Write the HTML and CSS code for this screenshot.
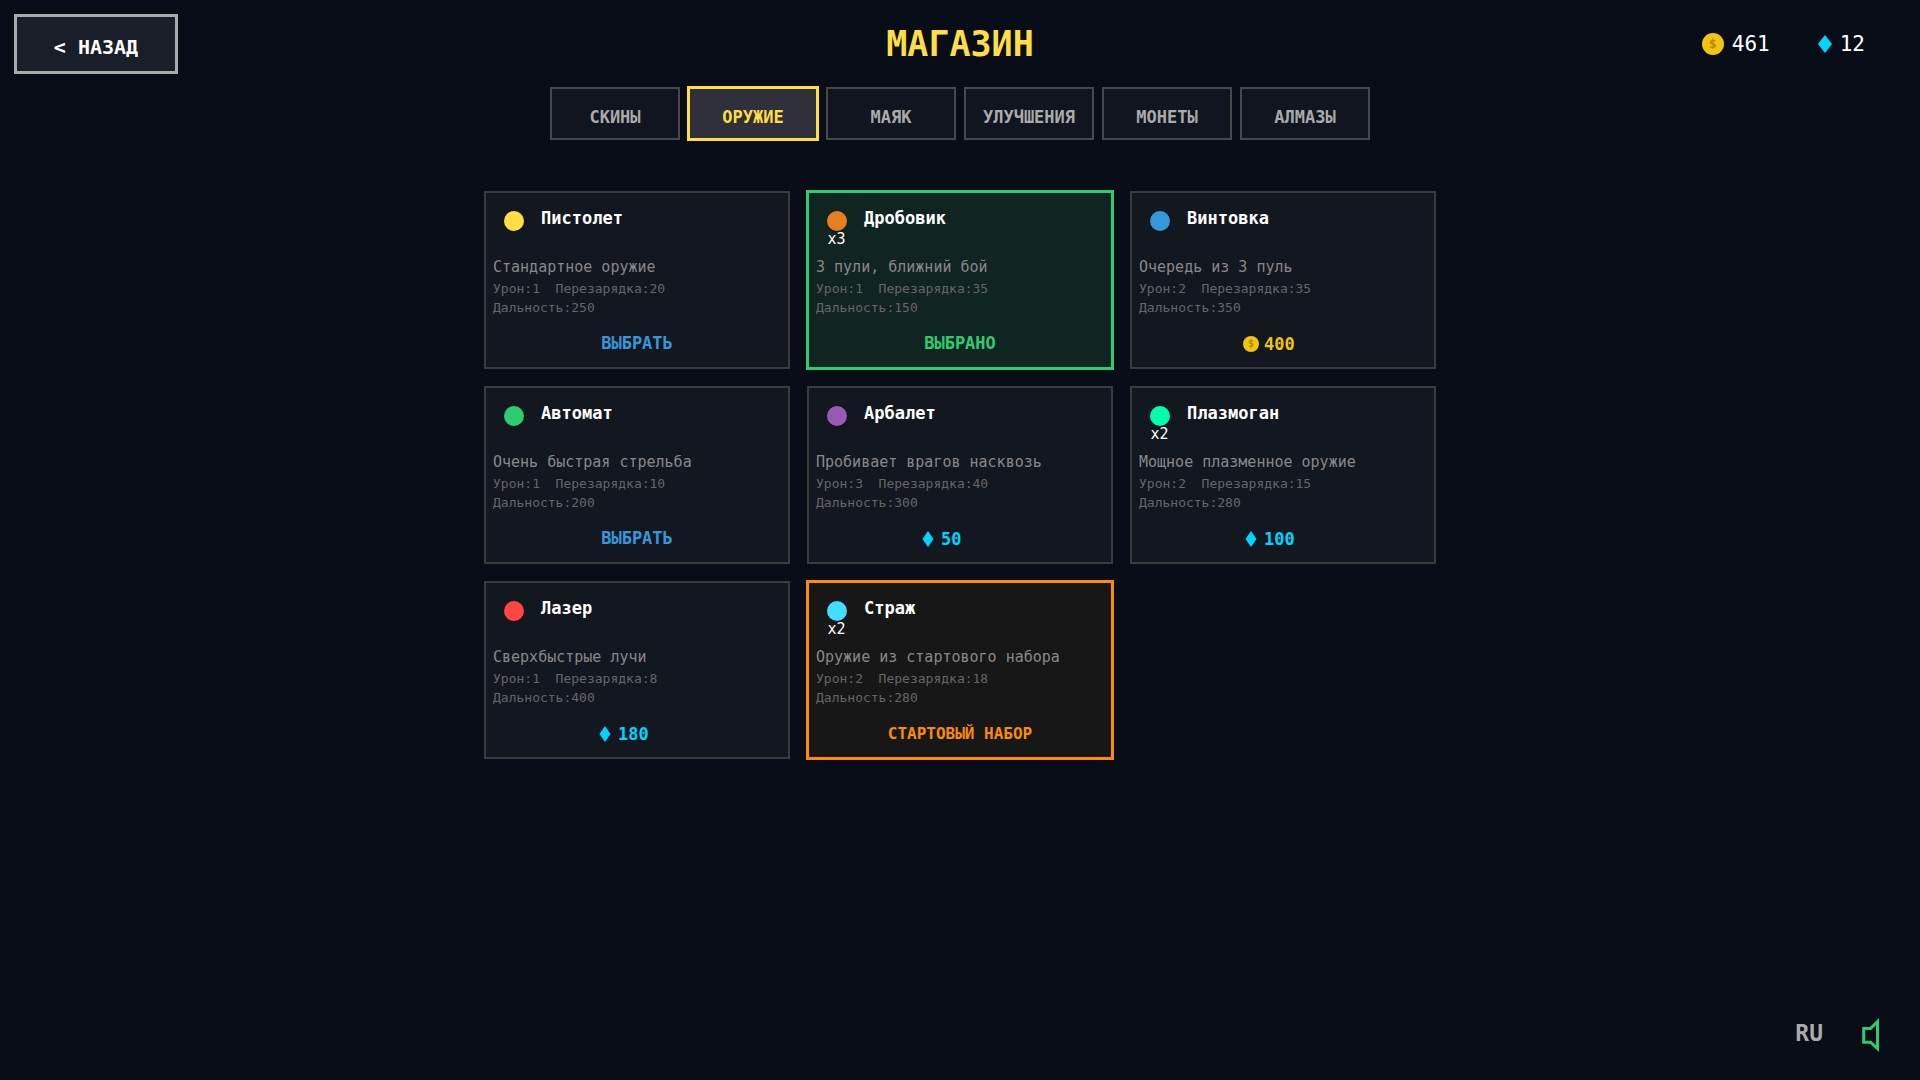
FILE: index.html
```html
<!DOCTYPE html>
<html lang="ru">
<head>
<meta charset="utf-8">
<meta name="viewport" content="width=device-width, initial-scale=1">
<title>Магазин</title>
<link rel="stylesheet" href="styles.css">
</head>
<body>
<header class="topbar">
  <button class="back" type="button">&lt; НАЗАД</button>
  <h1 class="title">МАГАЗИН</h1>
  <div class="wallet">
    <span class="balance"><span class="coin coin-lg">$</span>461</span>
    <span class="balance"><svg class="gem-lg" viewBox="0 0 14 18" aria-hidden="true"><path d="M7 0L14 9L7 18L0 9Z"/></svg>12</span>
  </div>
</header>

<nav class="tabs">
  <button class="tab" type="button">СКИНЫ</button>
  <button class="tab tab-active" type="button">ОРУЖИЕ</button>
  <button class="tab" type="button">МАЯК</button>
  <button class="tab" type="button">УЛУЧШЕНИЯ</button>
  <button class="tab" type="button">МОНЕТЫ</button>
  <button class="tab" type="button">АЛМАЗЫ</button>
</nav>

<main class="grid">
  <article class="card">
    <div class="card-head"><div class="marker"><span class="dot yellow"></span></div><h2 class="name">Пистолет</h2></div>
    <p class="desc">Стандартное оружие</p>
    <p class="stats">Урон:1  Перезарядка:20
Дальность:250</p>
    <button class="action choose" type="button">ВЫБРАТЬ</button>
  </article>
  <article class="card card-selected">
    <div class="card-head"><div class="marker"><span class="dot orange"></span><span class="count">x3</span></div><h2 class="name">Дробовик</h2></div>
    <p class="desc">3 пули, ближний бой</p>
    <p class="stats">Урон:1  Перезарядка:35
Дальность:150</p>
    <button class="action chosen" type="button">ВЫБРАНО</button>
  </article>
  <article class="card">
    <div class="card-head"><div class="marker"><span class="dot blue"></span></div><h2 class="name">Винтовка</h2></div>
    <p class="desc">Очередь из 3 пуль</p>
    <p class="stats">Урон:2  Перезарядка:35
Дальность:350</p>
    <button class="action gold" type="button"><span class="price"><span class="coin">$</span>400</span></button>
  </article>
  <article class="card">
    <div class="card-head"><div class="marker"><span class="dot green"></span></div><h2 class="name">Автомат</h2></div>
    <p class="desc">Очень быстрая стрельба</p>
    <p class="stats">Урон:1  Перезарядка:10
Дальность:200</p>
    <button class="action choose" type="button">ВЫБРАТЬ</button>
  </article>
  <article class="card">
    <div class="card-head"><div class="marker"><span class="dot purple"></span></div><h2 class="name">Арбалет</h2></div>
    <p class="desc">Пробивает врагов насквозь</p>
    <p class="stats">Урон:3  Перезарядка:40
Дальность:300</p>
    <button class="action diamond" type="button"><span class="price"><svg class="gem" viewBox="0 0 16 16" aria-hidden="true"><path d="M8 0L13.5 8L8 16L2.5 8Z"/></svg>50</span></button>
  </article>
  <article class="card">
    <div class="card-head"><div class="marker"><span class="dot mint"></span><span class="count">x2</span></div><h2 class="name">Плазмоган</h2></div>
    <p class="desc">Мощное плазменное оружие</p>
    <p class="stats">Урон:2  Перезарядка:15
Дальность:280</p>
    <button class="action diamond" type="button"><span class="price"><svg class="gem" viewBox="0 0 16 16" aria-hidden="true"><path d="M8 0L13.5 8L8 16L2.5 8Z"/></svg>100</span></button>
  </article>
  <article class="card">
    <div class="card-head"><div class="marker"><span class="dot red"></span></div><h2 class="name">Лазер</h2></div>
    <p class="desc">Сверхбыстрые лучи</p>
    <p class="stats">Урон:1  Перезарядка:8
Дальность:400</p>
    <button class="action diamond" type="button"><span class="price"><svg class="gem" viewBox="0 0 16 16" aria-hidden="true"><path d="M8 0L13.5 8L8 16L2.5 8Z"/></svg>180</span></button>
  </article>
  <article class="card card-starter">
    <div class="card-head"><div class="marker"><span class="dot cyan"></span><span class="count">x2</span></div><h2 class="name">Страж</h2></div>
    <p class="desc">Оружие из стартового набора</p>
    <p class="stats">Урон:2  Перезарядка:18
Дальность:280</p>
    <button class="action starter" type="button">СТАРТОВЫЙ НАБОР</button>
  </article>
</main>

<footer class="footer">
  <button class="lang" type="button">RU</button>
  <button class="sound" type="button" aria-label="Звук">
    <svg viewBox="0 0 18 36" aria-hidden="true"><path d="M1.7 11.6H8.5L15.5 4.6V31.6L8.5 25.2H1.7Z"/></svg>
  </button>
</footer>
</body>
</html>
```
FILE: styles.css
```css
* {
  box-sizing: border-box;
}

body {
  margin: 0;
  min-height: 100vh;
  display: flex;
  flex-direction: column;
  background: #080d18;
  color: #fff;
  font-family: "DejaVu Sans Mono", monospace;
}

h1, h2, p {
  margin: 0;
}

button {
  margin: 0;
  padding: 0;
  border: 0;
  background: none;
  color: inherit;
  font: inherit;
  cursor: pointer;
}

.topbar {
  display: grid;
  grid-template-columns: 1fr auto 1fr;
  align-items: center;
  padding: 14px 55px 0 14px;
}

/* Balances the wider right padding so the title stays centred. */
.title {
  padding-left: 41px;
  color: #ffdd44;
  font-size: 35px;
  line-height: 40px;
}

.back {
  justify-self: start;
  width: 164px;
  height: 60px;
  padding-top: 5px;
  border: 3px solid #aaa;
  background: #1a1e28;
  font-size: 20px;
  font-weight: bold;
}

.wallet {
  justify-self: end;
  display: flex;
  gap: 48px;
  font-size: 21px;
}

.balance {
  display: flex;
  align-items: center;
  gap: 8px;
}

.coin {
  width: 16px;
  height: 16px;
  border-radius: 50%;
  background: #f1c40f;
  color: #b8860b;
  font-size: 10px;
  font-weight: bold;
  line-height: 16px;
  text-align: center;
}

.coin-lg {
  width: 22px;
  height: 22px;
  font-size: 13px;
  line-height: 22px;
}

.gem, .gem-lg {
  fill: #00d4ff;
}

.gem {
  width: 16px;
  height: 16px;
}

.gem-lg {
  width: 14px;
  height: 18px;
}

.tabs {
  display: flex;
  justify-content: center;
  flex-wrap: wrap;
  gap: 8px;
  margin-top: 13px;
}

.tab {
  width: 130px;
  height: 53px;
  padding-top: 6px;
  border: 2px solid #484848;
  background: #11151f;
  color: #aaa;
  font-size: 17px;
  font-weight: bold;
}

.tab-active {
  border-color: #ffdd44;
  box-shadow: 0 0 0 1px #ffdd44;
  background: #2f303b;
  color: #ffdd44;
}

.grid {
  display: grid;
  grid-template-columns: repeat(auto-fit, 306px);
  justify-content: center;
  gap: 17px;
  width: 100%;
  max-width: 952px;
  margin: 51px auto 40px;
}

.card {
  display: flex;
  flex-direction: column;
  padding: 0 7px 12px;
  border: 2px solid #3c3c3c;
  background: #131720;
}

.card-selected {
  border-color: #2ecc71;
  box-shadow: 0 0 0 1px #2ecc71;
  background: #102422;
}

.card-starter {
  border-color: #ff8c00;
  box-shadow: 0 0 0 1px #ff8c00;
  background: #171717;
}

.card-head {
  display: grid;
  grid-template-columns: 41px 1fr;
  gap: 7px;
  min-height: 64px;
}

.marker {
  display: flex;
  flex-direction: column;
  align-items: center;
  padding-top: 18px;
}

.dot {
  width: 20px;
  height: 20px;
  border-radius: 50%;
}

.yellow { background: #ffdd44; }
.orange { background: #e67e22; }
.blue { background: #3498db; }
.green { background: #2ecc71; }
.purple { background: #9b59b6; }
.mint { background: #00ffaa; }
.red { background: #ff4444; }
.cyan { background: #44ddff; }

.count {
  font-size: 15px;
  line-height: 16px;
}

.name {
  padding-top: 15px;
  font-size: 17px;
  line-height: 20px;
}

.desc {
  color: #888;
  font-size: 15px;
  line-height: 20px;
}

.stats {
  margin-top: 2px;
  color: #666;
  font-size: 13px;
  line-height: 19px;
  white-space: pre-wrap;
}

.action {
  display: flex;
  align-items: center;
  justify-content: center;
  height: 24px;
  margin-top: 14px;
  font-size: 17px;
  font-weight: bold;
}

.choose { color: #3498db; }
.chosen { color: #2ecc71; }
.gold { color: #f1c40f; }
.diamond { color: #00d4ff; }

.starter {
  color: #ff8c00;
  font-size: 16px;
}

.price {
  display: flex;
  align-items: center;
  gap: 5px;
  width: 80px;
  padding-top: 2px;
}

.footer {
  display: flex;
  align-items: center;
  justify-content: flex-end;
  gap: 39px;
  margin-top: auto;
  padding: 0 40px 27px;
}

.lang {
  padding-bottom: 4px;
  color: #aaa;
  font-size: 23px;
  font-weight: bold;
}

.sound svg {
  display: block;
  width: 18px;
  height: 36px;
  fill: none;
  stroke: #2ecc71;
  stroke-width: 3;
}
```
